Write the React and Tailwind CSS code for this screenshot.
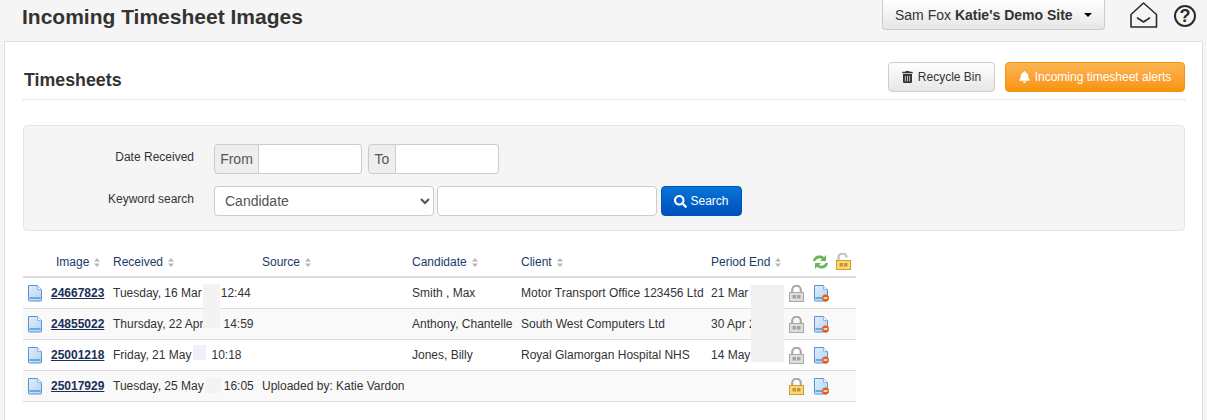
import React from "react";
import { FaTrashAlt, FaBell, FaSearch } from "react-icons/fa";

function Sort() {
  return (
    <svg width="6" height="9" viewBox="0 0 6 9" className="inline-block ml-[5px] align-[-1px]">
      <path d="M3 0L6 3.4H0Z M3 9L0 5.6H6Z" fill="#b5b5b5" />
    </svg>
  );
}

function Doc({ badge }) {
  return (
    <svg width="16" height="17" viewBox="0 0 16 17" className="block">
      <defs>
        <linearGradient id="docfill" x1="0" y1="0" x2="1" y2="1">
          <stop offset="0" stopColor="#e2eefb" />
          <stop offset="1" stopColor="#b4d3f1" />
        </linearGradient>
      </defs>
      <path d="M1.500.5H10.500L14.500 4.500V15a1 1 0 0 1-1 1H2.500a1 1 0 0 1-1-1Z" fill="url(#docfill)" stroke="#5a92d6" strokeWidth="1" />
      <path d="M10.500.5V4.500H14.500" fill="#f4f9fe" stroke="#8fb6e2" />
      <rect x="2.500" y="12" width="11" height="2" fill="#6aa9e6" />
      {badge && (
        <>
          <circle cx="12.500" cy="13" r="3.500" fill="#e2601a" />
          <rect x="10.500" y="12.300" width="4" height="1.400" fill="#fff" />
        </>
      )}
    </svg>
  );
}

function Lock({ tone, open }) {
  const gold = tone === "gold";
  return (
    <svg width="15" height="17" viewBox="0 0 15 17" className="block">
      <path
        d={open ? "M2.500 7.500V4.500a4 4 0 0 1 8 0" : "M3.200 8V5a4.300 4.300 0 0 1 8.600 0V8"}
        fill="none"
        stroke={open ? "#bdbdbd" : "#a8a8a8"}
        strokeWidth="2.200"
      />
      <rect x=".5" y="7.500" width="14" height="9" fill={gold ? "#fcd873" : "#dedede"} stroke={gold ? "#d09a2c" : "#a8a8a8"} />
      <rect x="3.500" y="10" width="8" height="3.500" fill={gold ? "#c2953a" : "#a3a3a3"} />
      <rect x="7" y="10" width="1" height="3.500" fill={gold ? "#fcd873" : "#dedede"} />
    </svg>
  );
}

function Refresh() {
  return (
    <svg width="17" height="16" viewBox="0 0 17 16" className="block">
      <path d="M1 7C1.500 3 5 1 8.500 1.500c1.500.2 2.700.8 3.500 1.700L14 1v6H8l2-2C8 3.600 5 4 3.500 7Z" fill="#6cb45c" />
      <path d="M16 9c-.5 4-4 6-7.500 5.500-1.500-.2-2.700-.8-3.500-1.700L3 15V9h6l-2 2c2 1.400 5 1 6.500-2Z" fill="#6cb45c" />
    </svg>
  );
}

const rows = [
  ["24667823", "Tuesday, 16 Mar", "12:44", "", "Smith , Max", "Motor Transport Office 123456 Ltd", "21 Mar", "grey"],
  ["24855022", "Thursday, 22 Apr", "14:59", "", "Anthony, Chantelle", "South West Computers Ltd", "30 Apr 2", "grey"],
  ["25001218", "Friday, 21 May", "10:18", "", "Jones, Billy", "Royal Glamorgan Hospital NHS", "14 May", "grey"],
  ["25017929", "Tuesday, 25 May", "16:05", "Uploaded by: Katie Vardon", "", "", "", "gold"],
];

const gaps = ["w-[19px]", "w-[20px]", "w-[20px]", "w-[20px]"];

export default function App() {
  return (
    <div className="h-[420px] overflow-hidden bg-[#f5f5f5] text-[#333] font-['Liberation_Sans',Arial,sans-serif] text-xs">
      <header className="flex h-[41px] items-start pl-[22px] pr-[11px]">
        <h1 className="mt-[4px] text-[21px] leading-[26px] font-bold text-[#333]">Incoming Timesheet Images</h1>
        <button className="ml-auto flex h-[30px] w-[223px] items-center justify-between rounded-[4px] rounded-t-none border border-[#ccc] border-t-0 bg-gradient-to-b from-white to-[#e6e6e6] pl-3 pr-[12px] text-sm text-[#333]">
          <span>Sam Fox <b>Katie's Demo Site</b></span>
          <span className="h-0 w-0 border-x-4 border-t-4 border-x-transparent border-t-black" />
        </button>
        <svg width="28" height="26" viewBox="0 0 28 26" className="ml-[25px] mt-[2px]" fill="none" stroke="#2b2b2b" strokeWidth="1.600">
          <path d="M1 12.500L13.500 1l13 11.500V25H1Z" strokeLinejoin="round" />
          <path d="M7.500 16l6 4 6-4" strokeLinecap="round" strokeLinejoin="round" />
        </svg>
        <div className="ml-[16px] mt-[5px] flex h-[22px] w-[22px] items-center justify-center rounded-full border-2 border-[#2b2b2b] text-lg leading-none font-bold text-[#2b2b2b]">?</div>
      </header>

      <main className="mx-[4px] h-[379px] border border-b-0 border-[#e0e0e0] bg-white pl-[18px] pr-[17px]">
        <div className="flex h-[58px] items-end justify-between border-b border-dotted border-[#d5d5d5] pb-[7px]">
          <h2 className="mb-0 h-[24px] pl-px text-[17.8px] leading-[24px] font-bold text-[#333]">Timesheets</h2>
          <div className="flex gap-[10px]">
            <button className="flex h-[30px] w-[107px] items-center justify-center gap-[5px] rounded-[4px] border border-[#ccc] bg-gradient-to-b from-white to-[#e6e6e6] text-xs text-[#333]">
              <FaTrashAlt className="h-[12px] w-[11px]" />
              Recycle Bin
            </button>
            <button className="flex h-[30px] w-[180px] items-center justify-center gap-[5px] rounded-[4px] border border-[#f0950f] bg-gradient-to-b from-[#fbb450] to-[#f89406] text-xs text-white">
              <FaBell className="h-[12px] w-[11px]" />
              Incoming timesheet alerts
            </button>
          </div>
        </div>

        <section className="mt-[25px] flex h-[106px] flex-col gap-[12px] rounded-[4px] border border-[#e3e3e3] bg-[#f5f5f5] pt-[18px]">
          <div className="flex h-[30px] items-center">
            <label className="mb-[4px] w-[170px] text-right text-xs text-[#333]">Date Received</label>
            <div className="ml-[20px] flex h-[30px]">
              <span className="flex w-[45px] items-center justify-center rounded-l-[4px] border border-[#ccc] bg-[#eee] text-sm text-[#555]">From</span>
              <input className="w-[103px] rounded-r-[4px] border border-l-0 border-[#ccc] bg-white" />
            </div>
            <div className="ml-[6px] flex h-[30px]">
              <span className="flex w-[28px] items-center justify-center rounded-l-[4px] border border-[#ccc] bg-[#eee] text-sm text-[#555]">To</span>
              <input className="w-[103px] rounded-r-[4px] border border-l-0 border-[#ccc] bg-white" />
            </div>
          </div>
          <div className="flex h-[30px] items-center">
            <label className="mb-[4px] w-[170px] text-right text-xs text-[#333]">Keyword search</label>
            <select className="ml-[20px] h-[30px] w-[220px] rounded-[4px] border border-[#ccc] bg-white pl-[6px] text-sm text-[#555]">
              <option>Candidate</option>
            </select>
            <input className="ml-[3px] h-[30px] w-[220px] rounded-[4px] border border-[#ccc] bg-white" />
            <button className="ml-[4px] flex h-[30px] w-[81px] items-center justify-center gap-[3px] rounded-[4px] border border-[#0052b8] bg-gradient-to-b from-[#0a74d6] to-[#0050bd] text-xs text-white">
              <FaSearch className="h-[13px] w-[13px]" />
              Search
            </button>
          </div>
        </section>

        <div className="relative mt-[16px] w-[833px]">
          <table className="w-[833px] table-fixed border-collapse text-xs text-[#333]">
            <colgroup>
              <col className="w-[86px]" />
              <col className="w-[149px]" />
              <col className="w-[150px]" />
              <col className="w-[109px]" />
              <col className="w-[190px]" />
              <col className="w-[78px]" />
              <col className="w-[24px]" />
              <col className="w-[23px]" />
              <col className="w-[24px]" />
            </colgroup>
            <thead>
              <tr className="h-[30px] border-b-2 border-[#ddd] text-left font-normal text-[#1a3a6b]">
                <th className="pl-[33px] font-normal">Image<Sort /></th>
                <th className="pl-[4px] font-normal">Received<Sort /></th>
                <th className="pl-[4px] font-normal">Source<Sort /></th>
                <th className="pl-[4px] font-normal">Candidate<Sort /></th>
                <th className="pl-[4px] font-normal">Client<Sort /></th>
                <th colSpan={2} className="pl-[4px] font-normal">Period End<Sort /></th>
                <th className="pl-[3px]"><Refresh /></th>
                <th className="pl-[4px]"><Lock tone="gold" open /></th>
              </tr>
            </thead>
            <tbody>
              {rows.map((r, i) => (
                <tr key={r[0]} className={`h-[31px] border-b border-[#ddd] ${i % 2 ? "bg-[#f9f9f9]" : "bg-white"}`}>
                  <td className="pl-[4px]">
                    <div className="flex items-center gap-[8px]">
                      <span className="mt-[2px]"><Doc /></span>
                      <a href="#" className="font-bold text-[#1a2f57] underline">{r[0]}</a>
                    </div>
                  </td>
                  <td className="pl-[4px] whitespace-nowrap">
                    <span>{r[1]}</span>
                    <span className={`inline-block ${gaps[i]}`} />
                    <span>{r[2]}</span>
                  </td>
                  <td className="pl-[4px] whitespace-nowrap">{r[3]}</td>
                  <td className="pl-[4px] whitespace-nowrap">{r[4]}</td>
                  <td className="pl-[4px] whitespace-nowrap">{r[5]}</td>
                  <td className="pl-[4px] whitespace-nowrap">{r[6]}</td>
                  <td className="pl-[4px] pt-[2px]"><Lock tone={r[7]} /></td>
                  <td className="pl-[4px] pt-[2px]"><Doc badge /></td>
                  <td />
                </tr>
              ))}
            </tbody>
          </table>
          <div className="absolute left-[180px] top-[37px] h-[44px] w-[17px] bg-[#f3f3f4]" />
          <div className="absolute left-[170px] top-[98px] h-[15px] w-[13px] bg-[#eef1f7]" />
          <div className="absolute left-[182px] top-[131px] h-[15px] w-[16px] bg-[#f3f3f4]" />
          <div className="absolute left-[728px] top-[38px] h-[77px] w-[33px] bg-[#f0f0f0]" />
        </div>
      </main>
    </div>
  );
}
